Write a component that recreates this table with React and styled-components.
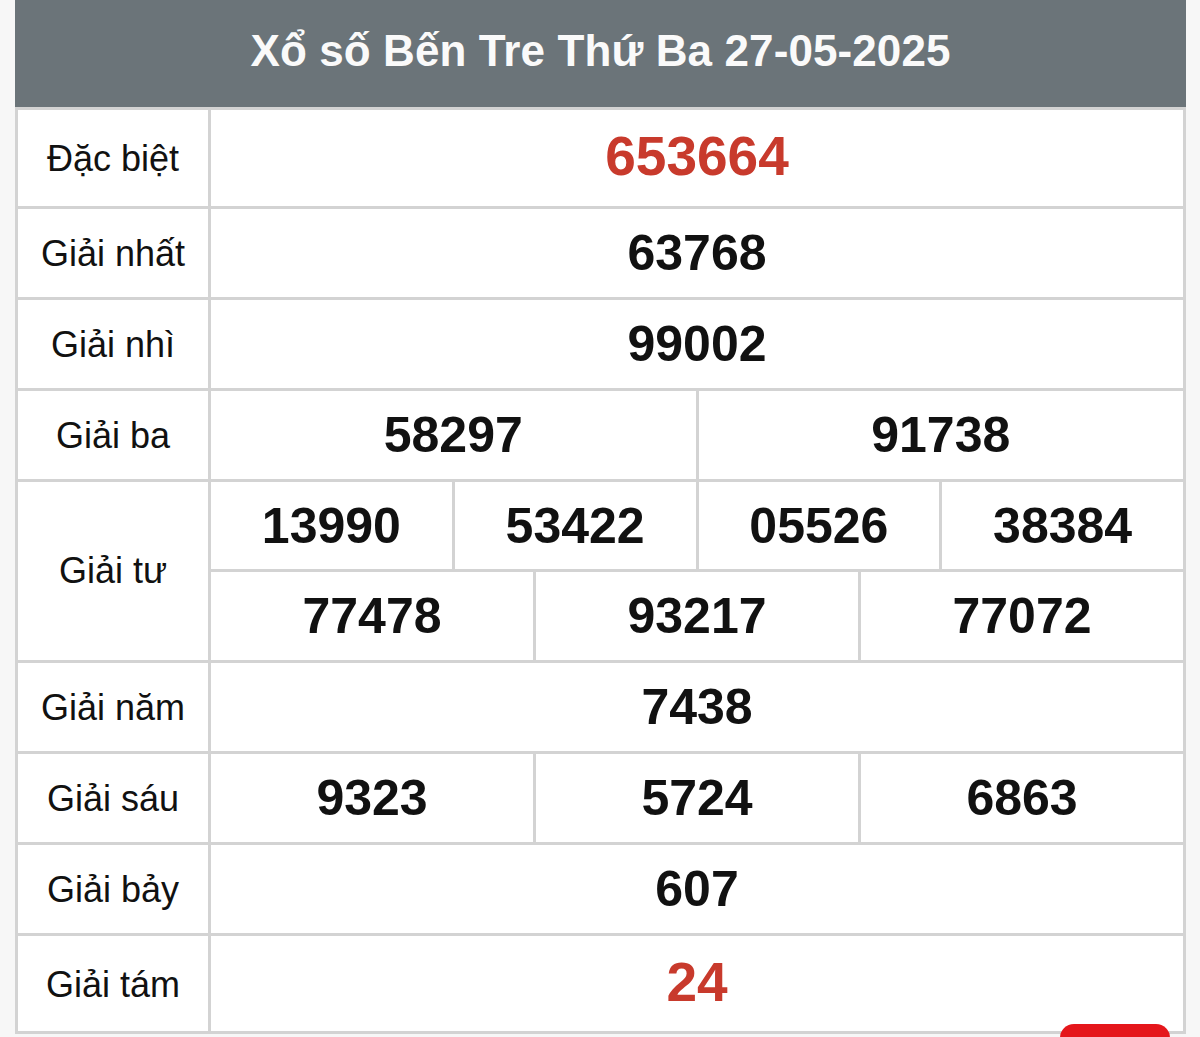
import React from "react";
import styled, { createGlobalStyle } from "styled-components";

// --- Global Style ---
const GlobalStyle = createGlobalStyle`
  html, body { margin: 0; padding: 0; background: #f7f7f7; }
  body { font-family: "Liberation Sans", Arial, sans-serif; }
`;

// --- Styled Components ---
const Page = styled.div`
  padding-left: 15px; width: 1171px;
`;

const Header = styled.div`
  height: 107px; background: #6b7479; color: #fafafa;
  display: flex; align-items: center; justify-content: center;
  padding-bottom: 6px; box-sizing: border-box;
  font-size: 44px; font-weight: 700; letter-spacing: 0.1px;
`;

const Board = styled.div`
  display: grid;
  grid-template-columns: 190px repeat(12, 1fr);
  grid-template-rows: 96px 88px 88px 88px 87px 88px 88px 88px 88px 95px;
  gap: 3px; padding: 3px; background: #d3d3d3;
`;

const Label = styled.div`
  grid-column: 1;
  grid-row: ${(p) => p.$row} / span ${(p) => p.$rows || 1};
  background: #fff; color: #111;
  display: flex; align-items: center; justify-content: center;
  font-size: 36px; padding-top: ${(p) => (p.$rows ? 0 : 2)}px;
`;

const Num = styled.div`
  grid-row: ${(p) => p.$row};
  grid-column: span ${(p) => p.$span};
  background: #fff;
  color: ${(p) => (p.$red ? "#c83a2c" : "#111")};
  display: flex; align-items: center; justify-content: center;
  font-size: ${(p) => (p.$red ? 55 : 50)}px; font-weight: 700;
  padding-bottom: ${(p) => (p.$red ? 4 : 0)}px;
`;

const TopButton = styled.div`
  position: fixed; right: 30px; bottom: -31px;
  width: 110px; height: 44px; border-radius: 14px; background: #e5161b;
`;

const rows = [
  { label: "Đặc biệt", nums: ["653664"], red: true },
  { label: "Giải nhất", nums: ["63768"] },
  { label: "Giải nhì", nums: ["99002"] },
  { label: "Giải ba", nums: ["58297", "91738"] },
  { label: "Giải tư", nums: ["13990", "53422", "05526", "38384"], sub: ["77478", "93217", "77072"] },
  { label: "Giải năm", nums: ["7438"] },
  { label: "Giải sáu", nums: ["9323", "5724", "6863"] },
  { label: "Giải bảy", nums: ["607"] },
  { label: "Giải tám", nums: ["24"], red: true },
];

export default function App() {
  let line = 1;
  const cells = [];
  rows.forEach((r) => {
    const height = r.sub ? 2 : 1;
    cells.push(
      <Label key={r.label} $row={line} $rows={r.sub ? 2 : undefined}>{r.label}</Label>
    );
    r.nums.forEach((n, i) => {
      cells.push(
        <Num key={r.label + i} $row={line} $span={12 / r.nums.length} $red={r.red}>{n}</Num>
      );
    });
    if (r.sub) {
      r.sub.forEach((n, i) => {
        cells.push(
          <Num key={r.label + "s" + i} $row={line + 1} $span={12 / r.sub.length}>{n}</Num>
        );
      });
    }
    line += height;
  });

  return (
    <Page>
      <GlobalStyle />
      <Header>Xổ số Bến Tre Thứ Ba 27-05-2025</Header>
      <Board>{cells}</Board>
      <TopButton />
    </Page>
  );
}
